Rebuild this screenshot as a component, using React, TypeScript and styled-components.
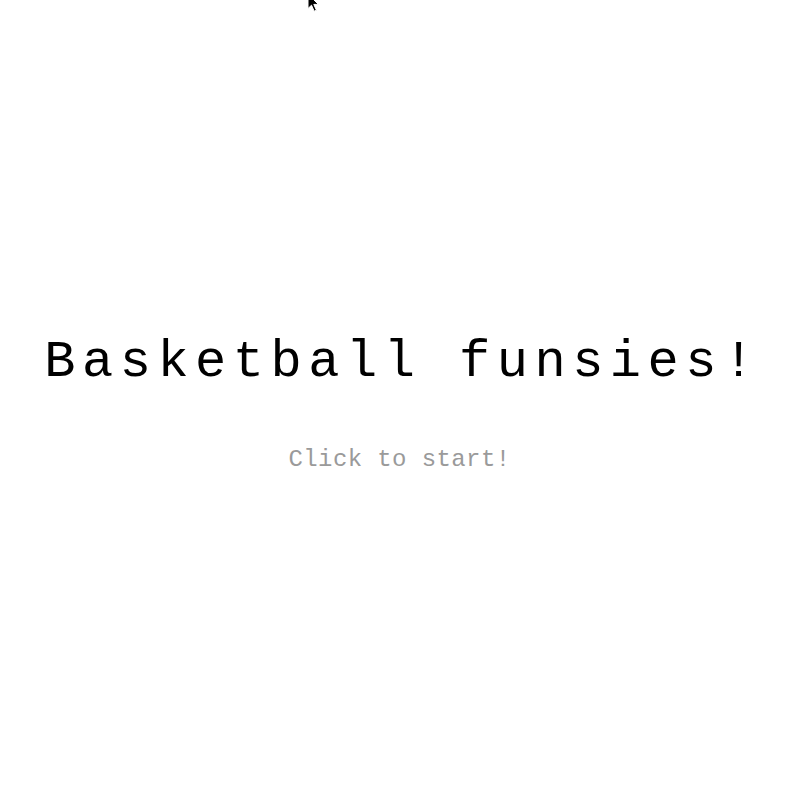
import React from "react";
import styled, { createGlobalStyle } from "styled-components";

const GlobalStyle = createGlobalStyle`
  html, body {
    margin: 0;
    padding: 0;
    background: #ffffff;
  }
  body {
    font-family: "Liberation Mono", "Courier New", monospace;
  }
`;

const Screen = styled.main`
  position: relative;
  width: 100vw;
  height: 100vh;
  display: flex;
  flex-direction: column;
  align-items: center;
  justify-content: center;
  overflow: hidden;
  cursor: pointer;
`;

const Title = styled.h1`
  margin: 13px 0 0 6px;
  font-family: "Liberation Mono", "Courier New", monospace;
  font-weight: normal;
  font-size: 52px;
  letter-spacing: 6.5px;
  line-height: 1;
  color: #000000;
  white-space: nowrap;
`;

const Prompt = styled.p`
  margin: 59px 0 0;
  font-family: "Liberation Mono", "Courier New", monospace;
  font-size: 24px;
  letter-spacing: 0.4px;
  line-height: 1;
  color: #9a9a9a;
`;

const Pointer = styled.svg`
  position: absolute;
  left: 307px;
  top: -7px;
  width: 13px;
  height: 20px;
  pointer-events: none;
`;

export default function App() {
  return (
    <>
      <GlobalStyle />
      <Screen>
        <Title>Basketball funsies!</Title>
        <Prompt>Click to start!</Prompt>
        <Pointer viewBox="0 0 13 20" aria-hidden="true">
          <path
            d="M1 1 L1 15.5 L4.5 12.2 L7.2 18.2 L9.4 17.2 L6.8 11.4 L11.4 11.4 Z"
            fill="#000"
            stroke="#fff"
            strokeWidth="1"
            strokeLinejoin="round"
          />
        </Pointer>
      </Screen>
    </>
  );
}
